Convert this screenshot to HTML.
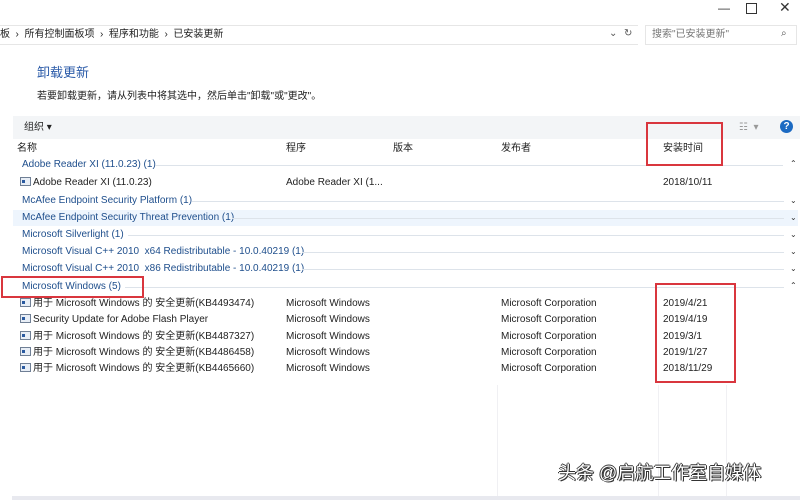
<!DOCTYPE html>
<html><head><meta charset="utf-8"><style>
body{margin:0;width:800px;height:500px;overflow:hidden;background:#fff;font-family:"Liberation Sans","Noto Sans CJK SC",sans-serif;font-size:10px;color:#222;position:relative}
.a{position:absolute;white-space:nowrap;line-height:12px}
.g{color:#1e4e8c}
.line{position:absolute;height:1px;background:#dde3ea}
.ic{display:inline-block;width:9px;height:7px;border:1px solid #6f7f95;background:#e8eef6;margin-right:2px;vertical-align:-1px;position:relative}
.ic:before{content:"";position:absolute;left:1px;top:2px;width:3px;height:3px;background:#2a5aa0}
.chev{position:absolute;left:790px;color:#333;font-size:8px;line-height:12px}
.red{position:absolute;border:2px solid #d9363e}
</style></head><body>
<div class="a" style="left:718px;top:2px;font-size:12px;color:#333">—</div>
<div class="a" style="left:746px;top:3px;width:9px;height:9px;border:1.5px solid #333"></div>
<div class="a" style="left:779px;top:1px;font-size:14px;color:#333">✕</div>
<div class="a" style="left:0;top:25px;width:638px;height:18px;border-top:1px solid #e6e6e6;border-bottom:1px solid #e6e6e6"></div>
<div class="a" style="left:0;top:29px;color:#222">板 &nbsp;›&nbsp; 所有控制面板项 &nbsp;›&nbsp; 程序和功能 &nbsp;›&nbsp; 已安装更新</div>
<div class="a" style="left:609px;top:28px;color:#555">⌄</div>
<div class="a" style="left:624px;top:28px;color:#555">↻</div>
<div class="a" style="left:645px;top:25px;width:150px;height:18px;border:1px solid #e6e6e6"></div>
<div class="a" style="left:652px;top:29px;color:#777">搜索"已安装更新"</div>
<div class="a" style="left:781px;top:28px;color:#555">⌕</div>
<div class="a" style="left:37px;top:65px;font-size:13px;line-height:16px;color:#2a5aa8">卸载更新</div>
<div class="a" style="left:37px;top:91px">若要卸载更新，请从列表中将其选中，然后单击"卸载"或"更改"。</div>
<div class="a" style="left:13px;top:116px;width:787px;height:23px;background:#f3f5f7"></div>
<div class="a" style="left:24px;top:122px">组织 ▾</div>
<div class="a" style="left:739px;top:122px;color:#999">☷ &nbsp;▾</div>
<div class="a" style="left:780px;top:120px;width:13px;height:13px;border-radius:50%;background:#1c6ac2;color:#fff;font-size:10px;font-weight:bold;text-align:center;line-height:13px">?</div>
<div class="a" style="left:17px;top:143px">名称</div>
<div class="a" style="left:286px;top:143px">程序</div>
<div class="a" style="left:393px;top:143px">版本</div>
<div class="a" style="left:501px;top:143px">发布者</div>
<div class="a" style="left:663px;top:143px">安装时间</div>
<div class="a" style="left:13px;top:210px;width:785px;height:16px;background:#eef5fd"></div>
<div class="a g" style="left:22px;top:159px">Adobe Reader XI (11.0.23) (1)</div><div class="line" style="left:155px;width:628px;top:165px"></div><div class="chev" style="top:158px">⌃</div>
<div class="a" style="left:20px;top:177px"><span class="ic"></span>Adobe Reader XI (11.0.23)</div><div class="a" style="left:286px;top:177px">Adobe Reader XI (1...</div><div class="a" style="left:663px;top:177px">2018/10/11</div>
<div class="a g" style="left:22px;top:195px">McAfee Endpoint Security Platform (1)</div><div class="line" style="left:192px;width:592px;top:201px"></div><div class="chev" style="top:195px">⌄</div>
<div class="a g" style="left:22px;top:212px">McAfee Endpoint Security Threat Prevention (1)</div><div class="line" style="left:232px;width:552px;top:218px"></div><div class="chev" style="top:212px">⌄</div>
<div class="a g" style="left:22px;top:229px">Microsoft Silverlight (1)</div><div class="line" style="left:128px;width:656px;top:235px"></div><div class="chev" style="top:229px">⌄</div>
<div class="a g" style="left:22px;top:246px">Microsoft Visual C++ 2010 &nbsp;x64 Redistributable - 10.0.40219 (1)</div><div class="line" style="left:302px;width:482px;top:252px"></div><div class="chev" style="top:246px">⌄</div>
<div class="a g" style="left:22px;top:263px">Microsoft Visual C++ 2010 &nbsp;x86 Redistributable - 10.0.40219 (1)</div><div class="line" style="left:302px;width:482px;top:269px"></div><div class="chev" style="top:263px">⌄</div>
<div class="a g" style="left:22px;top:281px">Microsoft Windows (5)</div><div class="line" style="left:125px;width:659px;top:287px"></div><div class="chev" style="top:280px">⌃</div>
<div class="a" style="left:20px;top:298px"><span class="ic"></span>用于 Microsoft Windows 的 安全更新(KB4493474)</div><div class="a" style="left:286px;top:298px">Microsoft Windows</div><div class="a" style="left:501px;top:298px">Microsoft Corporation</div><div class="a" style="left:663px;top:298px">2019/4/21</div>
<div class="a" style="left:20px;top:314px"><span class="ic"></span>Security Update for Adobe Flash Player</div><div class="a" style="left:286px;top:314px">Microsoft Windows</div><div class="a" style="left:501px;top:314px">Microsoft Corporation</div><div class="a" style="left:663px;top:314px">2019/4/19</div>
<div class="a" style="left:20px;top:331px"><span class="ic"></span>用于 Microsoft Windows 的 安全更新(KB4487327)</div><div class="a" style="left:286px;top:331px">Microsoft Windows</div><div class="a" style="left:501px;top:331px">Microsoft Corporation</div><div class="a" style="left:663px;top:331px">2019/3/1</div>
<div class="a" style="left:20px;top:347px"><span class="ic"></span>用于 Microsoft Windows 的 安全更新(KB4486458)</div><div class="a" style="left:286px;top:347px">Microsoft Windows</div><div class="a" style="left:501px;top:347px">Microsoft Corporation</div><div class="a" style="left:663px;top:347px">2019/1/27</div>
<div class="a" style="left:20px;top:363px"><span class="ic"></span>用于 Microsoft Windows 的 安全更新(KB4465660)</div><div class="a" style="left:286px;top:363px">Microsoft Windows</div><div class="a" style="left:501px;top:363px">Microsoft Corporation</div><div class="a" style="left:663px;top:363px">2018/11/29</div>
<div class="a" style="left:497px;top:385px;width:1px;height:112px;background:#f0f0f3"></div>
<div class="a" style="left:658px;top:385px;width:1px;height:112px;background:#f0f0f3"></div>
<div class="a" style="left:726px;top:385px;width:1px;height:112px;background:#f0f0f3"></div>
<div class="a" style="left:12px;top:496px;width:788px;height:4px;background:#e8e9ef"></div>
<div class="red" style="left:646px;top:122px;width:73px;height:40px"></div>
<div class="red" style="left:655px;top:283px;width:77px;height:96px"></div>
<div class="red" style="left:1px;top:276px;width:139px;height:18px"></div>
<div class="a" style="left:558px;top:462px;font-size:18px;line-height:22px;color:#fff;text-shadow:1px 1px 0 #333,-1px 0 0 #333,0 -1px 0 #333,1px 0 0 #333">头条 @启航工作室自媒体</div>
</body></html>
